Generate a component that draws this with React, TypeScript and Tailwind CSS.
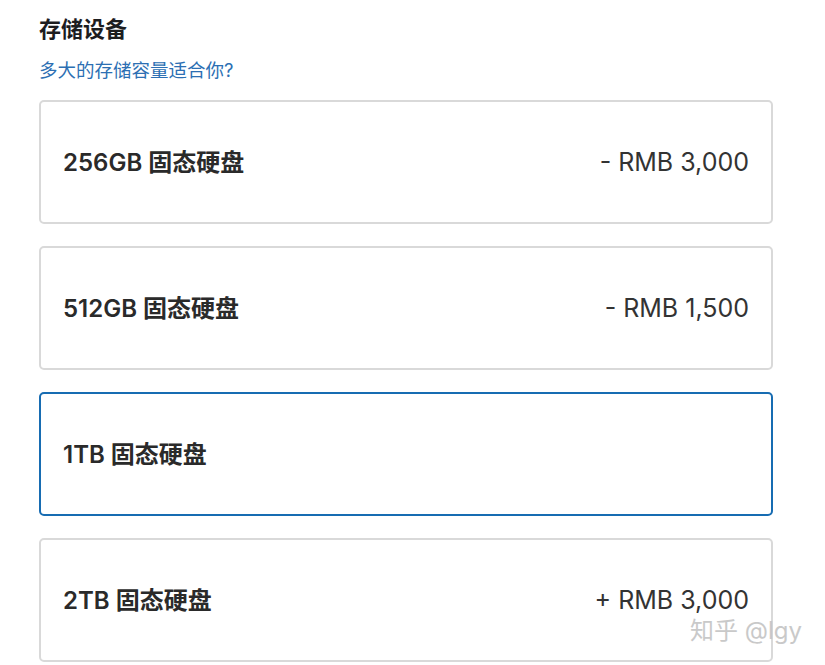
import React from "react";

const options = [
  { name: "256GB 固态硬盘", price: "- RMB 3,000", selected: false },
  { name: "512GB 固态硬盘", price: "- RMB 1,500", selected: false },
  { name: "1TB 固态硬盘", price: "", selected: true },
  { name: "2TB 固态硬盘", price: "+ RMB 3,000", selected: false },
];

export default function App() {
  return (
    <div
      className="relative w-[825px] h-[665px] overflow-hidden bg-white"
      style={{ fontFamily: 'Inter, "Noto Sans CJK SC", sans-serif' }}
    >
      <div className="pl-[39px] pr-[52px] pt-[13px]">
        <h2 className="text-[22px] leading-[32px] font-bold text-[#1d1d1f]">存储设备</h2>
        <p className="mt-[13px] text-[18.5px] leading-[24px] text-[#2c6fb3]">多大的存储容量适合你?</p>
        <div className="mt-[18px] flex flex-col gap-[22px]">
          {options.map((o) => (
            <div
              key={o.name}
              className={
                o.selected
                  ? "h-[124px] rounded-[5px] border-2 border-[#176cb2] flex items-center justify-between px-[22px] pt-[2px]"
                  : "h-[124px] rounded-[5px] border-2 border-[#d9d9d9] flex items-center justify-between px-[22px] pt-[2px]"
              }
            >
              <span className="text-[24px] font-semibold text-[#2a2a2a]">{o.name}</span>
              <span className="text-[25px] text-[#333333]">{o.price}</span>
            </div>
          ))}
        </div>
      </div>
      <div className="absolute left-[690px] top-[613px] text-[24px] text-[#c4c4c4] opacity-90">知乎 @lgy</div>
    </div>
  );
}
